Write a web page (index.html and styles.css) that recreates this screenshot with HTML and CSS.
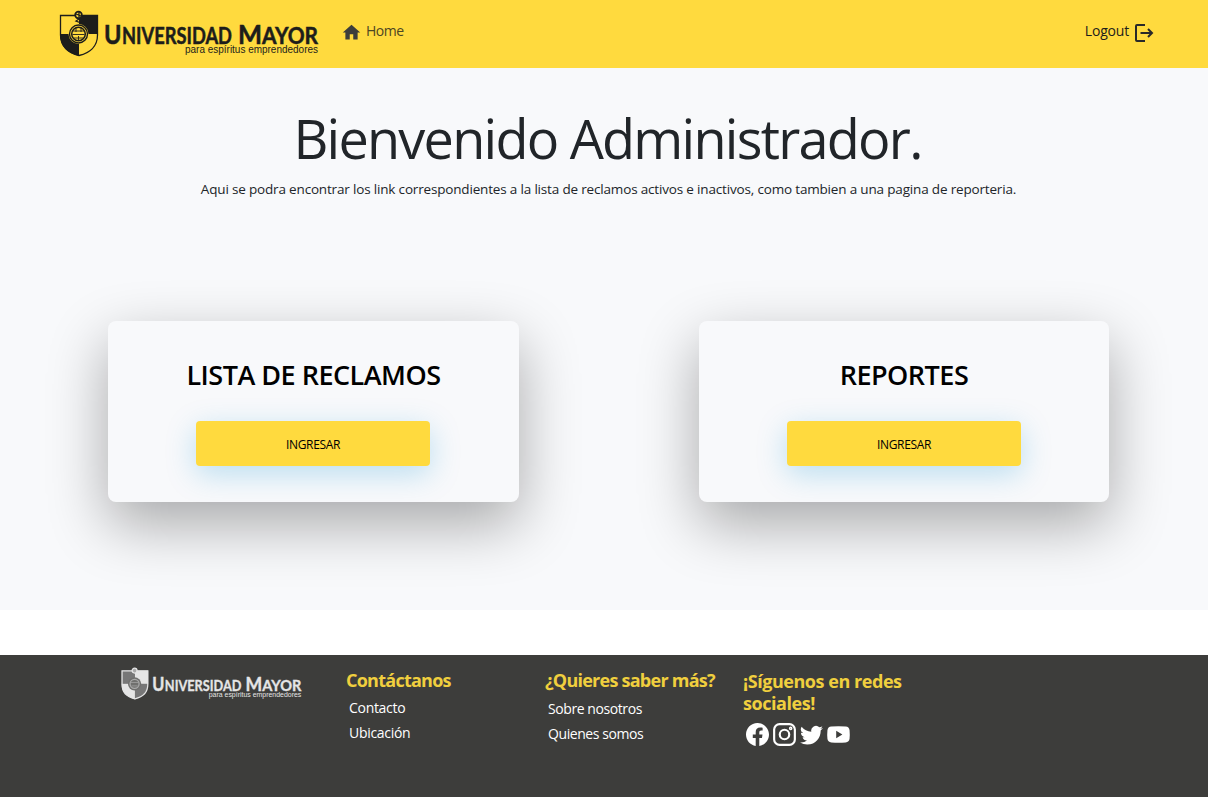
FILE: index.html
```html
<!DOCTYPE html>
<html lang="es">
<head>
<meta charset="utf-8">
<title>Universidad Mayor</title>
<link rel="stylesheet" href="styles.css">
</head>
<body>
<header class="navbar">
  <svg class="logo" viewBox="0 0 260 47">
    <path d="M20 5H39V24H20Z" fill="currentColor"/>
    <path d="M1 24H20V46C9 43 1 37 1 24Z" fill="currentColor"/>
    <path d="M1.500 5.500H38.500V25C38.500 36 31 43 20 45.500C9 43 1.500 36 1.500 25Z" fill="none" stroke="currentColor" stroke-width="1.300"/>
    <circle cx="19.500" cy="24" r="10" class="brand-ground"/>
    <circle cx="19.500" cy="24" r="9" fill="none" stroke="currentColor" stroke-width="1.400"/>
    <circle cx="19.500" cy="24" r="6.800" fill="none" stroke="currentColor" stroke-width="1.500"/>
    <path d="M14 21H25M13.500 24.500H25.500M15 28H24M17 18V22M22 18V22M19.500 26V30" fill="none" stroke="currentColor" stroke-width=".9"/>
    <circle cx="19.500" cy="5" r="3.300" class="brand-ground" stroke="currentColor" stroke-width="1.800"/>
    <path d="M17 4L22 6M20 2V9L17 11L22 13" fill="none" stroke="currentColor" stroke-width="1.300"/>
    <g class="brand-name">
      <text x="45" y="33.800" font-size="26" textLength="17.500" lengthAdjust="spacingAndGlyphs">U</text>
      <text x="63" y="33.800" font-size="22.500" textLength="110" lengthAdjust="spacingAndGlyphs">NIVERSIDAD</text>
      <text x="179" y="33.800" font-size="26" textLength="24" lengthAdjust="spacingAndGlyphs">M</text>
      <text x="203" y="33.800" font-size="22.500" textLength="56" lengthAdjust="spacingAndGlyphs">AYOR</text>
    </g>
    <text class="brand-motto" x="126" y="43" textLength="133" lengthAdjust="spacingAndGlyphs">para espíritus emprendedores</text>
  </svg>
  <a class="home-link"><svg class="home-icon" viewBox="0 0 24 24"><path d="M10 20v-6h4v6h5v-8h3L12 3 2 12h3v8z"/></svg><span>Home</span></a>
  <a class="logout-link"><span>Logout</span><svg class="logout-icon" viewBox="0 0 20 20"><path d="M11 2H3Q2 2 2 3V17Q2 18 3 18H11M6.500 10H18M14 6L18 10L14 14"/></svg></a>
</header>
<main class="hero">
  <h1 class="title">Bienvenido Administrador.</h1>
  <p class="intro">Aqui se podra encontrar los link correspondientes a la lista de reclamos activos e inactivos, como tambien a una pagina de reporteria.</p>
  <div class="cards">
    <section class="card"><h2 class="card-title">LISTA DE RECLAMOS</h2><button class="enter">INGRESAR</button></section>
    <section class="card"><h2 class="card-title">REPORTES</h2><button class="enter">INGRESAR</button></section>
  </div>
</main>
<footer class="footer">
  <svg class="footer-logo" viewBox="0 0 260 47">
    <path d="M1 5H20V24H1Z" fill="#777"/>
    <path d="M20 24H39C39 36 31 43 20 46Z" fill="#777"/>
    <path d="M20 5H39V24H20Z" fill="currentColor"/>
    <path d="M1 24H20V46C9 43 1 37 1 24Z" fill="currentColor"/>
    <path d="M1.500 5.500H38.500V25C38.500 36 31 43 20 45.500C9 43 1.500 36 1.500 25Z" fill="none" stroke="currentColor" stroke-width="1.800"/>
    <circle cx="19.500" cy="24" r="9.500" class="brand-ground"/>
    <circle cx="19.500" cy="24" r="6.500" fill="none" stroke="#aaa" stroke-width="1.800"/>
    <path d="M14 22H25M15 27H24" stroke="#aaa"/>
    <circle cx="19.500" cy="5" r="3.500" fill="#aaa" stroke="currentColor" stroke-width="1.800"/>
    <g class="brand-name">
      <text x="45" y="33.800" font-size="26" textLength="17.500" lengthAdjust="spacingAndGlyphs">U</text>
      <text x="63" y="33.800" font-size="22.500" textLength="110" lengthAdjust="spacingAndGlyphs">NIVERSIDAD</text>
      <text x="179" y="33.800" font-size="26" textLength="24" lengthAdjust="spacingAndGlyphs">M</text>
      <text x="203" y="33.800" font-size="22.500" textLength="56" lengthAdjust="spacingAndGlyphs">AYOR</text>
    </g>
    <text class="brand-motto" x="126" y="43" textLength="133" lengthAdjust="spacingAndGlyphs">para espíritus emprendedores</text>
  </svg>
  <div class="column contact">
    <h3 class="heading">Contáctanos</h3>
    <a class="link">Contacto</a><a class="link">Ubicación</a>
  </div>
  <div class="column about">
    <h3 class="heading">¿Quieres saber más?</h3>
    <a class="link">Sobre nosotros</a><a class="link">Quienes somos</a>
  </div>
  <div class="column social">
    <h3 class="heading">¡Síguenos en redes<br>sociales!</h3>
    <div class="icons">
      <svg viewBox="0 0 16 16"><path d="M16 8.049c0-4.446-3.582-8.050-8-8.050C3.580 0-.002 3.603-.002 8.050c0 4.017 2.926 7.347 6.750 7.951v-5.625h-2.030V8.050H6.750V6.275c0-2.017 1.195-3.131 3.022-3.131.876 0 1.791.157 1.791.157v1.980h-1.009c-.993 0-1.303.621-1.303 1.258v1.510h2.218l-.354 2.326H9.250V16c3.824-.604 6.750-3.934 6.750-7.951z"/></svg>
      <svg viewBox="0 0 16 16" class="instagram"><rect x=".8" y=".8" width="14.400" height="14.400" rx="3.800"/><circle cx="8" cy="8" r="3.300"/><circle cx="12.300" cy="3.750" r=".5"/></svg>
      <svg viewBox="0 0 16 16"><path d="M5.026 15c6.038 0 9.341-5.003 9.341-9.334 0-.140 0-.282-.006-.422A6.685 6.685 0 0 0 16 3.542a6.658 6.658 0 0 1-1.889.518 3.301 3.301 0 0 0 1.447-1.817 6.533 6.533 0 0 1-2.087.793A3.286 3.286 0 0 0 7.875 6.030a9.325 9.325 0 0 1-6.767-3.429 3.289 3.289 0 0 0 1.018 4.382A3.323 3.323 0 0 1 .64 6.575v.045a3.288 3.288 0 0 0 2.632 3.218 3.203 3.203 0 0 1-.865.115 3.230 3.230 0 0 1-.614-.057 3.283 3.283 0 0 0 3.067 2.277A6.588 6.588 0 0 1 .78 13.580a6.320 6.320 0 0 1-.780-.045A9.344 9.344 0 0 0 5.026 15z"/></svg>
      <svg viewBox="0 0 16 16"><path fill-rule="evenodd" d="M3 2.500Q8 2 13 2.500Q15.400 2.700 15.700 5Q16 8 15.700 11Q15.400 13.300 13 13.500Q8 14 3 13.500Q.6 13.300 .3 11Q0 8 .3 5Q.6 2.700 3 2.500ZM6.400 5.400V10.600L10.700 8Z"/></svg>
    </div>
  </div>
</footer>
</body>
</html>
```
FILE: styles.css
```css
* { box-sizing: border-box; }
body { margin: 0; background: #fff; color: #212529; font-family: "Segoe UI", "Open Sans", "Noto Sans", sans-serif; }
h1, h2, h3, p { margin: 0; }
.navbar { height: 68px; background: #ffda3e; display: flex; align-items: flex-start; padding: 10px 54px 0 59px; font-size: 14px; line-height: 20px; color: #1d1d1b; }
.logo { width: 260px; height: 47px; overflow: visible; }
.brand-ground { fill: #ffda3e; }
.brand-name { font-family: Lato, sans-serif; font-weight: 700; fill: currentColor; stroke: currentColor; stroke-width: .5; }
.brand-motto { font-family: "Liberation Sans", Arial, sans-serif; font-size: 10.500px; fill: currentColor; }
.home-link { display: flex; margin: 11px 0 0 22px; gap: 4px; color: #4d4623; letter-spacing: -.5px; }
.home-icon { width: 21px; height: 21px; margin-top: 1px; fill: #3d3d3b; }
.logout-link { display: flex; gap: 5px; margin: 11px 0 0 auto; letter-spacing: -.2px; }
.logout-icon { width: 20px; height: 20px; margin-top: 2px; fill: none; stroke: #292929; stroke-width: 2; }
.hero { height: 542px; background: #f8f9fb; padding-top: 37px; }
.title { text-align: center; font-size: 54px; line-height: 66px; font-weight: 400; letter-spacing: -1.750px; padding-left: 7px; }
.intro { text-align: center; font-size: 13.500px; line-height: 20px; margin-top: 8px; padding-left: 9px; white-space: nowrap; letter-spacing: -.172px; }
.cards { display: grid; grid-template-columns: 411px 410px; column-gap: 180px; margin: 122px 0 0 108px; }
.card { height: 181px; border-radius: 8px; background: #f8f9fb; box-shadow: 0 22px 60px rgba(0, 0, 0, .33); display: flex; flex-direction: column; align-items: flex-start; padding: 36px 88px 0; }
.card-title { align-self: center; color: #000; font-size: 27px; line-height: 36px; font-weight: 600; letter-spacing: -.5px; white-space: nowrap; }
.enter { width: 234px; height: 45px; margin-top: 28px; padding: 1px 0 0; border: 0; border-radius: 4px; background: #ffda3e; color: #000; font: 12px "Segoe UI", "Open Sans", sans-serif; letter-spacing: -.350px; box-shadow: 0 8px 30px rgba(0, 142, 210, .25); }
.footer { height: 142px; margin-top: 45px; background: #3d3d3b; display: flex; align-items: flex-start; color: #fff; }
.footer-logo { width: 181px; height: 33px; margin: 12px 0 0 121px; color: #e5e5e5; overflow: visible; }
.footer-logo .brand-ground { fill: #70706e; }
.column { display: flex; flex-direction: column; }
.heading { color: #f0cf3e; font-size: 18px; line-height: 22px; font-weight: 700; white-space: nowrap; letter-spacing: -.750px; }
.link { font-size: 14px; line-height: 25px; margin-left: 3px; letter-spacing: -.420px; }
.contact { width: 199px; margin: 14px 0 0 44px; }
.contact .heading { margin-bottom: 4px; }
.contact .link { letter-spacing: -.3px; }
.about { width: 198px; margin-top: 14px; }
.about .heading { margin-bottom: 5px; }
.social { margin-top: 15px; }
.social .heading { letter-spacing: -.450px; }
.icons { display: flex; gap: 4px; margin: 9px 0 0 3px; }
.icons svg { width: 23px; height: 23px; fill: #fff; }
.icons .instagram { fill: none; stroke: #fff; stroke-width: 1.500; }
```
